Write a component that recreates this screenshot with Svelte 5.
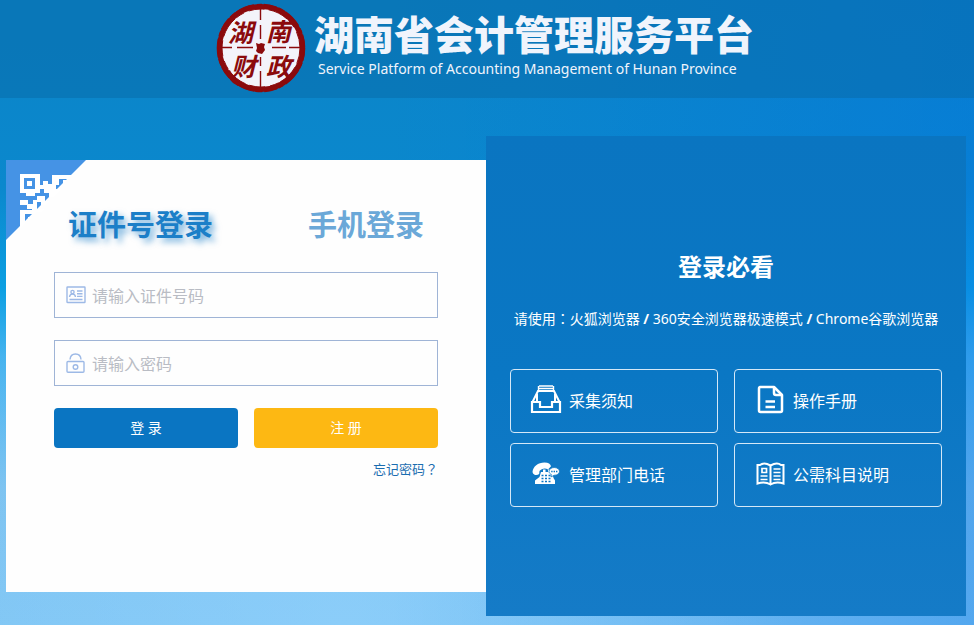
<script lang="ts">
  interface Notice {
    icon: 'tray' | 'doc' | 'phone' | 'book';
    label: string;
  }

  const notices: Notice[] = [
    { icon: 'tray', label: '采集须知' },
    { icon: 'doc', label: '操作手册' },
    { icon: 'phone', label: '管理部门电话' },
    { icon: 'book', label: '公需科目说明' },
  ];

  let mode = $state<'card' | 'phone'>('card');
  let account = $state('');
  let password = $state('');

  let accountHint = $derived(mode === 'card' ? '请输入证件号码' : '请输入手机号码');

  function handleSubmit(event: SubmitEvent) {
    event.preventDefault();
  }
</script>

<div class="page">
  <header class="header">
    <svg class="seal" viewBox="0 0 90 90" aria-hidden="true">
      <circle cx="45" cy="45" r="41" fill="#f3f3fa" />
      <circle cx="45" cy="45" r="41.5" fill="none" stroke="#8b0a0c" stroke-width="5" />
      <circle
        cx="45"
        cy="45"
        r="43.6"
        fill="none"
        stroke="#8b0a0c"
        stroke-width="1.4"
        stroke-dasharray="13 2 7 1 19 3 5 2"
      />
      <circle
        cx="45"
        cy="45"
        r="39"
        fill="none"
        stroke="#8b0a0c"
        stroke-width="1"
        stroke-dasharray="16 4 21 2 9 5"
      />
      <path
        d="M44.500 5v12M44.500 22v14M44.500 54v9M44.500 68v17M5 44.500h11M21 44.500h16M56 44.500h14M73 44.500h12"
        stroke="#8b0a0c"
        stroke-width="1.4"
      />
      <path d="M40 40l3 1 2-1 4 1-1 3 1 3-3 4-4-1-2-2 1-3z" fill="#8b0a0c" />
      <path d="M11 69l3-2 1 4 4 2 1 4 4 3-2 3-5-3-5-6z" fill="#8b0a0c" />
      <g class="seal-text">
        <text x="12" y="39">湖</text>
        <text x="50" y="38">南</text>
        <text x="15" y="73">财</text>
        <text x="50" y="73">政</text>
      </g>
    </svg>
    <div class="brand">
      <h1>湖南省会计管理服务平台</h1>
      <p>Service Platform of Accounting Management of Hunan Province</p>
    </div>
  </header>

  <main class="panels">
    <section class="login">
      <button class="qr" type="button" aria-label="QR">
        <svg viewBox="0 0 80 80" aria-hidden="true">
          <path d="M0 0h80L0 80z" fill="#4593e5" />
          <g fill="#fff" shape-rendering="crispEdges">
            <path fill-rule="evenodd" d="M14 14h20v19h-20zM18 18v11h11v-11zM21 21h5v5h-5z" />
            <path d="M20 33h9v3h-9zM34 25h3v-4h5v3h4v-9h20l-4 4h-9v6h-3v4h5l-8 8h-4v-4h-5v-4h-4z" />
            <path d="M57 20h4l-4 4z" />
            <path d="M14 40h8v4h5v-4h4v-4h8v5h4l-4 4h-4v-3h-4v7h7l-3 3h-9v-3h-5v-4h-7z" />
            <path d="M14 50h18l-4 4h-9v9l-5 5z" />
            <path d="M22 57h4l-4 4z" />
          </g>
        </svg>
      </button>

      <div class="tabs" role="tablist">
        <button
          class="tab"
          class:active={mode === 'card'}
          role="tab"
          aria-selected={mode === 'card'}
          onclick={() => (mode = 'card')}
        >
          证件号登录
        </button>
        <button
          class="tab"
          class:active={mode === 'phone'}
          role="tab"
          aria-selected={mode === 'phone'}
          onclick={() => (mode = 'phone')}
        >
          手机登录
        </button>
      </div>

      <form onsubmit={handleSubmit}>
        <label class="field">
          <svg viewBox="0 0 20 20" fill="none" stroke="#9db9e6" stroke-width="1.4" aria-hidden="true">
            <rect x="1" y="2" width="18" height="15.500" rx="0.500" />
            <circle cx="6.500" cy="7" r="1.600" />
            <path d="M3.500 12c.3-2 1.400-3 3-3s2.700 1 3 3M11 6h5.500M11 8.700h5.500M11 11.400h5.500M3.500 14.500h13" />
          </svg>
          <input type="text" aria-label={accountHint} placeholder={accountHint} bind:value={account} />
        </label>
        <label class="field">
          <svg viewBox="0 0 20 20" fill="none" stroke="#9db9e6" stroke-width="1.400" aria-hidden="true">
            <rect x="1" y="8.500" width="17" height="10.800" rx="1" />
            <path d="M4 6.500C4.300 3 6.500 1 9.500 1s5.300 2 5.500 5.500" />
            <circle cx="9.500" cy="14" r="2.300" />
          </svg>
          <input type="password" aria-label="请输入密码" placeholder="请输入密码" bind:value={password} />
        </label>
        <div class="actions">
          <button class="submit" type="submit">登 录</button>
          <button class="register" type="button">注 册</button>
        </div>
        <a class="forgot" href="#forgot">忘记密码<span class="mark">？</span></a>
      </form>
    </section>

    <section class="info">
      <h2>登录必看</h2>
      <p>请使用<span class="mark">：</span>火狐浏览器 <b>/</b> 360安全浏览器极速模式 <b>/</b> Chrome谷歌浏览器</p>
      <nav class="notices">
        {#each notices as notice}
          <a class="notice" href="#{notice.icon}">
            <svg viewBox="0 0 32 32" aria-hidden="true">
              {#if notice.icon === 'tray'}
                <g fill="none" stroke="#fff" stroke-width="2.200">
                  <path d="M2 18h8v5h12v-5h8v10H2z" />
                  <path d="M2.500 18L8 7h16l5.500 11M7 10v8M25 10v8" stroke-width="2" />
                  <path d="M8 4.500h16M9 2h14M8.500 2v5M23.500 2v5" stroke-width="1.400" />
                </g>
              {:else if notice.icon === 'doc'}
                <g fill="none" stroke="#fff" stroke-width="2.500" stroke-linejoin="round">
                  <path d="M6 3h14L28 11v15.500q0 1.500-1.500 1.500h-20Q5 28 5 26.500V4.500Q5 3 6.500 3z" />
                  <path d="M20 3.500v5.500q0 2 2 2H27M11.500 17.500h9.500M11.500 23h9.500" />
                </g>
              {:else if notice.icon === 'phone'}
                <g fill="#fff">
                  <path d="M2.500 14C3 8.500 8 4.500 14.500 4.500c4 0 6 1.500 6.500 3.800L18 11.500c-3-2-6.500-.8-8.500 1.500l-.3 3c-2 1.800-6 1.500-6.700-2z" />
                  <path d="M11 14h2v-2.500h2.500V14h2.500v-2.500h2V14h2l1.500 6 1.500 2.500V26H5v-3.500L9.500 19z" />
                </g>
                <path
                  d="M19 13.500c0-2.200 2.200-4 5.200-4s5.300 1.700 5.300 3.900-2.300 3.900-5.300 3.900l-3.200 1.600.3-2.500c-1.500-.7-2.300-1.700-2.300-2.900z"
                  fill="#fff"
                  stroke="#0a76c4"
                  stroke-width="0.800"
                />
                <path
                  d="M11.500 17.500h2M15 17.500h2M18.500 17.500h2M11.500 20.500h2M15 20.500h2M18.500 20.500h2M11.500 23.500h2M15 23.500h2M18.500 23.500h2M21.200 13.500h1.400M23.600 13.500H25M26 13.500h1.400"
                  stroke="#0a76c4"
                  stroke-width="1.300"
                />
              {:else}
                <g fill="none" stroke="#fff" stroke-width="2">
                  <path d="M16.500 7.500Q10 4 6 7H3.500v18.500Q11 23 16.500 26.500 22 23 29.500 25.500V7H27Q23 4 16.500 7.500v19" />
                  <path
                    d="M8 10.500h4.500v4H8zM6.500 18h7M6.500 21.500h7M19.500 11h7M19.500 14.500h7M19.500 18h7M19.500 21.500h7"
                    stroke-width="1.700"
                  />
                </g>
              {/if}
            </svg>
            <span>{notice.label}</span>
          </a>
        {/each}
      </nav>
    </section>
  </main>
</div>

<style>
  :global(body) {
    margin: 0;
  }

  .page {
    box-sizing: border-box;
    min-height: 100vh;
    padding-bottom: 9px;
    background:
      radial-gradient(ellipse at 35% 100%, rgba(150, 212, 255, 0.5), rgba(150, 212, 255, 0) 50%),
      linear-gradient(90deg, rgba(0, 110, 230, 0) 40%, rgba(0, 110, 230, 0.35)),
      linear-gradient(180deg, #0b84c8 0%, #0b88cd 30%, #0c9fe2 46%, #45b3ef 57%, #7cc2f0 78%, #80c6f4 100%);
    font-family: 'Noto Sans', 'Noto Sans CJK SC', sans-serif;
  }

  .header {
    display: flex;
    justify-content: center;
    gap: 8px;
    box-sizing: border-box;
    height: 98px;
    padding: 3px 4px 0 0;
    background: rgba(8, 106, 168, 0.5);
  }

  .seal {
    width: 90px;
    height: 90px;
  }

  .seal-text {
    fill: #8b0a0c;
    font-size: 25px;
    font-style: italic;
    font-weight: 700;
  }

  .brand {
    color: #f0f4fc;
  }

  h1 {
    margin: 9px 0 0;
    font-family: 'Liberation Sans', 'Noto Sans CJK SC', sans-serif;
    font-size: 40px;
    font-weight: 900;
    line-height: 48px;
  }

  .brand p {
    margin: 0;
    padding-left: 4px;
    font-size: 14px;
    line-height: 18px;
  }

  .panels {
    display: flex;
    align-items: center;
    justify-content: center;
    padding: 38px 8px 0 6px;
  }

  .login,
  .info {
    box-sizing: border-box;
    flex: 1;
    max-width: 480px;
  }

  .login {
    position: relative;
    min-height: 432px;
    padding: 40px 48px;
    background: #fefefe;
  }

  .qr {
    position: absolute;
    top: 0;
    left: 0;
    width: 80px;
    height: 80px;
    padding: 0;
    border: none;
    background: none;
    cursor: pointer;
  }

  .qr svg {
    display: block;
  }

  .tabs {
    position: relative;
    display: flex;
    justify-content: space-between;
    padding: 0 14px;
  }

  .tab {
    padding: 0;
    border: none;
    background: none;
    color: #6ba8d8;
    font: inherit;
    font-size: 29px;
    font-weight: 700;
    line-height: 50px;
    cursor: pointer;
  }

  .tab.active {
    color: #1c7fc8;
    text-shadow: 4px 4px 6px rgba(28, 127, 200, 0.6);
  }

  form {
    display: flex;
    flex-direction: column;
    gap: 22px;
    padding-top: 22px;
  }

  .field {
    display: flex;
    align-items: center;
    gap: 6px;
    box-sizing: border-box;
    height: 46px;
    padding: 0 11px;
    border: 1px solid #9fb4d6;
  }

  .field svg {
    flex: none;
    width: 20px;
    height: 20px;
  }

  .field input {
    flex: 1;
    min-width: 0;
    padding: 2px 0 0;
    border: none;
    outline: none;
    background: none;
    color: #333;
    font: inherit;
    font-size: 16px;
    line-height: 24px;
  }

  .field input::placeholder {
    color: #b9bcc4;
    opacity: 1;
  }

  .actions {
    display: grid;
    grid-template-columns: 1fr 1fr;
    gap: 16px;
  }

  .actions button {
    height: 40px;
    padding: 0 0 2px;
    border: none;
    border-radius: 4px;
    color: #fff;
    font: inherit;
    font-size: 14px;
    cursor: pointer;
  }

  .submit {
    background: #0a75c2;
  }

  .register {
    background: #fdb813;
  }

  .forgot {
    align-self: flex-end;
    margin-top: -11px;
    color: #1a6db0;
    font-size: 13px;
    line-height: 20px;
    text-decoration: none;
  }

  /* the TC face centres full-width punctuation in its box */
  .mark {
    font-family: 'Noto Sans CJK TC', sans-serif;
    line-height: 1;
  }

  .info {
    min-height: 480px;
    padding: 112px 24px 0;
    background: linear-gradient(180deg, #0a75c1, #0a77c4 50%, #157bc7);
    color: #fff;
    text-align: center;
  }

  h2 {
    margin: 0;
    font-size: 24px;
    font-weight: 700;
    line-height: 38px;
  }

  .info p {
    margin: 20px -8px 0;
    font-size: 14px;
    line-height: 26px;
    white-space: nowrap;
  }

  .notices {
    display: grid;
    grid-template-columns: 1fr 1fr;
    gap: 10px 16px;
    padding-top: 37px;
  }

  .notice {
    display: flex;
    align-items: center;
    gap: 7px;
    box-sizing: border-box;
    height: 64px;
    padding: 0 19px 2px;
    border: 1px solid #d5e8f7;
    border-radius: 4px;
    color: #fff;
    font-size: 16px;
    text-decoration: none;
  }

  .notice svg {
    flex: none;
    width: 32px;
    height: 32px;
  }
</style>
